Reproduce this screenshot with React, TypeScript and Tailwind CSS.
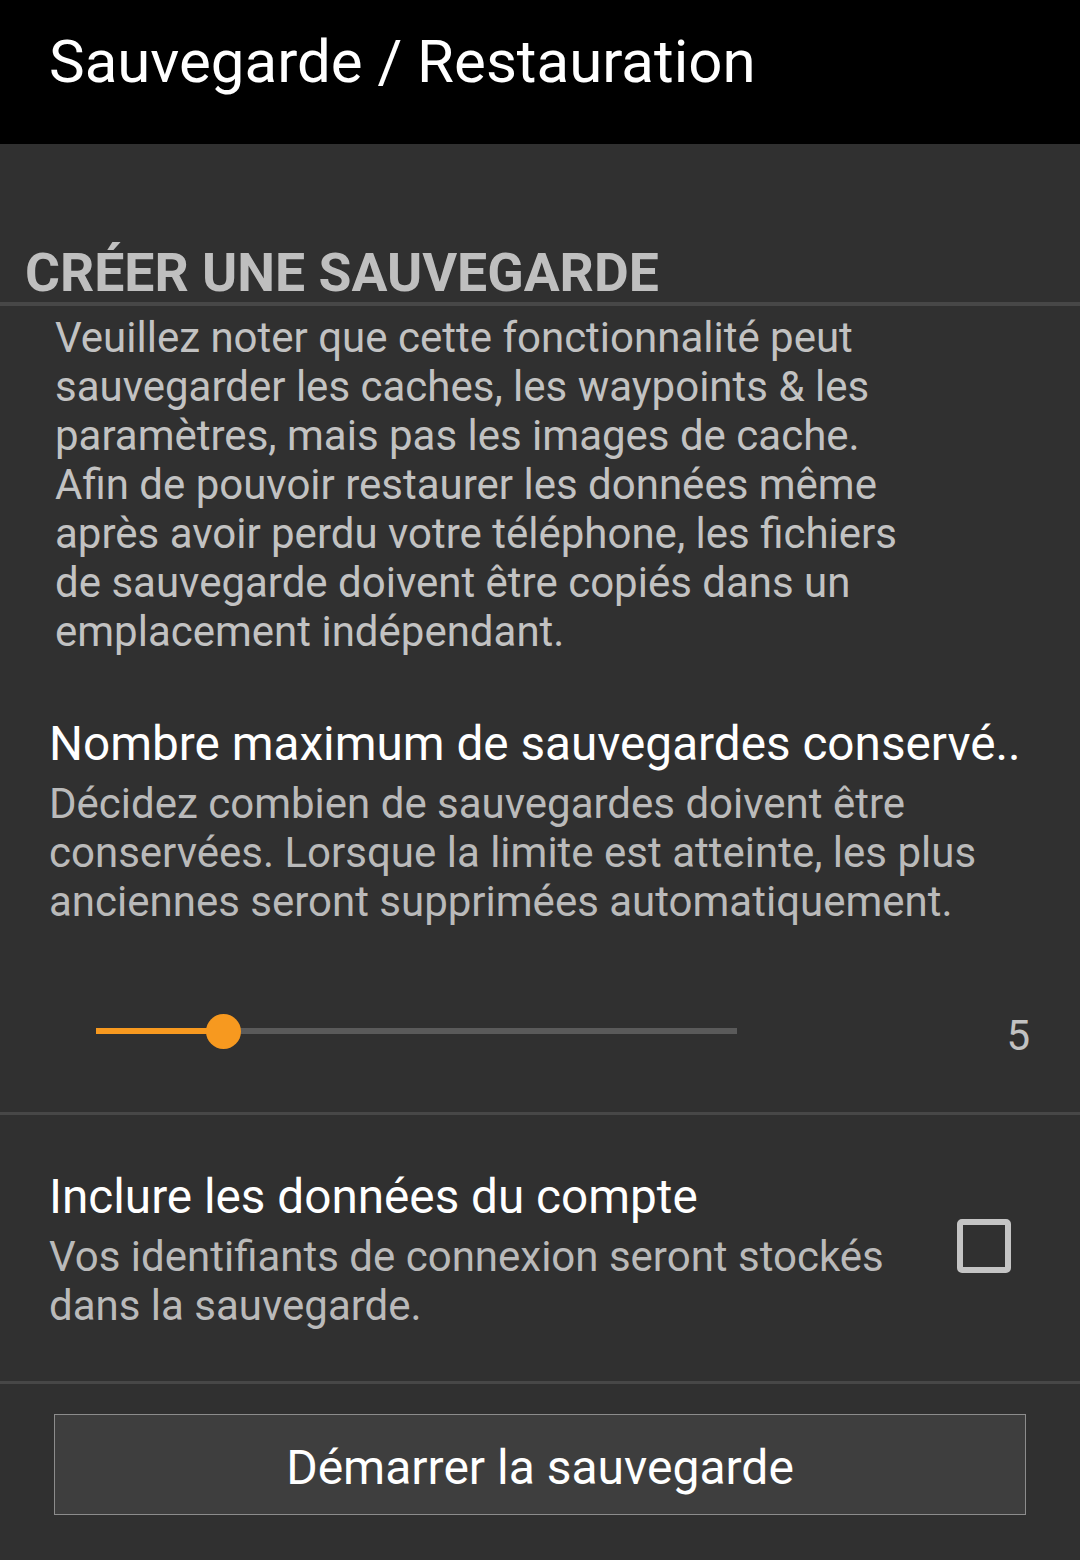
import React from "react";

function Divider({ h }: { h: string }) {
    return <div className={`w-full bg-[#474747] ${h}`} />;
}

export default function App() {
    return (
        <div className="min-h-[1560px] w-[1080px] bg-[#303030] font-[Roboto,sans-serif]">
            <header className="h-[144px] bg-black pl-[49px] pt-[32px]">
                <h1 className="text-[60px] leading-[60px] text-white">Sauvegarde / Restauration</h1>
            </header>

            <div className="pt-[100px]">
                <h2 className="pl-[25px] text-[53.5px] font-bold leading-[58px] text-[#bfbfbf]">
                    CRÉER UNE SAUVEGARDE
                </h2>
            </div>
            <Divider h="h-[4px]" />

            <p className="mt-[7px] w-[920px] pl-[55px] text-[42px] leading-[49px] text-[#c2c2c2]">
                Veuillez noter que cette fonctionnalité peut sauvegarder les caches, les waypoints &amp; les
                paramètres, mais pas les images de cache. Afin de pouvoir restaurer les données même après avoir
                perdu votre téléphone, les fichiers de sauvegarde doivent être copiés dans un emplacement
                indépendant.
            </p>

            {/* max backups */}
            <section className="pl-[49px] pt-[60px]">
                <div className="w-[990px] overflow-hidden whitespace-nowrap text-[47.7px] leading-[56px] text-white">
                    Nombre maximum de sauvegardes conservé..
                </div>
                <div className="mt-[7px] w-[960px] text-[42px] leading-[49px] text-[#bababa]">
                    Décidez combien de sauvegardes doivent être conservées. Lorsque la limite est atteinte, les plus
                    anciennes seront supprimées automatiquement.
                </div>
            </section>
            <div className="flex items-start pb-[58px] pl-[96px] pr-[50px] pt-[87px]">
                <div className="relative flex h-[36px] w-[641px] items-center">
                    <div className="h-[6px] w-[128px] flex-none bg-[#f7991f]" />
                    <div className="h-[6px] flex-1 bg-[#5a5a5a]" />
                    <div className="absolute left-[110px] top-[0.5px] h-[35px] w-[35px] rounded-full bg-[#f7991f]" />
                </div>
                <div className="ml-auto mt-[5px] text-[42px] leading-[36px] text-[#c2c2c2]">5</div>
            </div>
            <Divider h="h-[3px]" />

            {/* account data */}
            <div className="flex items-center pb-[51px] pl-[49px] pr-[69px] pt-[54px]">
                <div className="w-[870px]">
                    <div className="text-[47.7px] leading-[56px] text-white">Inclure les données du compte</div>
                    <div className="mt-[7px] text-[42px] leading-[49px] text-[#bababa]">
                        Vos identifiants de connexion seront stockés dans la sauvegarde.
                    </div>
                </div>
                <div className="mb-[7px] ml-auto h-[54px] w-[54px] rounded-[5px] border-[6px] border-[#c4c4c4]" />
            </div>
            <Divider h="h-[3px]" />

            <div className="px-[54px] pt-[30px]">
                <button className="flex h-[101px] w-full items-center justify-center border border-[#8c8c8c] bg-[#3e3e3e] pt-[6px] text-[48px] leading-[48px] text-white">
                    Démarrer la sauvegarde
                </button>
            </div>
        </div>
    );
}
